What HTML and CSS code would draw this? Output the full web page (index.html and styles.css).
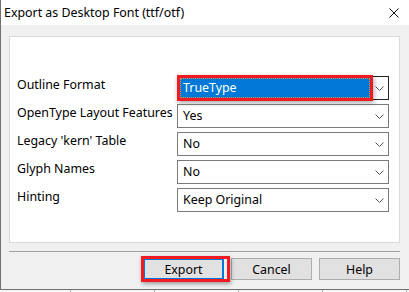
FILE: index.html
```html
<!DOCTYPE html>
<html lang="en">
<head>
    <meta charset="UTF-8">
    <title>Export as Desktop Font</title>
    <link rel="stylesheet" href="styles.css">
</head>
<body>
    <div class="window">
        <div class="titlebar">
            <span class="title">Export as Desktop Font (ttf/otf)</span>
            <span class="close">
                <svg width="10" height="10" viewBox="0 0 10 10"><path d="M0.5 0.5 L9.5 9.5 M9.5 0.5 L0.5 9.5" stroke="#111" stroke-width="1"/></svg>
            </span>
        </div>
        <div class="client">
            <div class="panel">
                <div class="form-grid">
                    <label>Outline Format</label>
                    <div class="select focused">
                        <span class="value selected">TrueType</span>
                        <svg class="chev" width="9" height="5" viewBox="0 0 9 5"><path d="M0.5 0.5 L4.5 4.5 L8.5 0.5" fill="none" stroke="#555"/></svg>
                    </div>

                    <label>OpenType Layout Features</label>
                    <div class="select">
                        <span class="value">Yes</span>
                        <svg class="chev" width="9" height="5" viewBox="0 0 9 5"><path d="M0.5 0.5 L4.5 4.5 L8.5 0.5" fill="none" stroke="#555"/></svg>
                    </div>

                    <label>Legacy 'kern' Table</label>
                    <div class="select">
                        <span class="value">No</span>
                        <svg class="chev" width="9" height="5" viewBox="0 0 9 5"><path d="M0.5 0.5 L4.5 4.5 L8.5 0.5" fill="none" stroke="#555"/></svg>
                    </div>

                    <label>Glyph Names</label>
                    <div class="select">
                        <span class="value">No</span>
                        <svg class="chev" width="9" height="5" viewBox="0 0 9 5"><path d="M0.5 0.5 L4.5 4.5 L8.5 0.5" fill="none" stroke="#555"/></svg>
                    </div>

                    <label>Hinting</label>
                    <div class="select">
                        <span class="value">Keep Original</span>
                        <svg class="chev" width="9" height="5" viewBox="0 0 9 5"><path d="M0.5 0.5 L4.5 4.5 L8.5 0.5" fill="none" stroke="#555"/></svg>
                    </div>
                </div>
            </div>
            <div class="separator"></div>
            <div class="buttons">
                <button class="btn default marked">Export</button>
                <button class="btn">Cancel</button>
                <button class="btn">Help</button>
            </div>
        </div>
    </div>
    <div class="backdrop">
        <span></span><span></span><span></span><span></span><span></span>
    </div>
</body>
</html>
```

FILE: styles.css
```css
body { margin: 0; font-family: "Noto Sans", "Open Sans", sans-serif; font-size: 12.4px; color: #000; background: #f7f7f7; overflow: hidden; }
.window { width: 408px; height: 289px; border-left: 1px solid #707070; border-bottom: 1px solid #707070; display: flex; flex-direction: column; background: #f0f0f0; }
.titlebar { height: 25px; background: #fff; display: flex; align-items: center; justify-content: space-between; padding: 0 10px 0 3px; }
.close { display: flex; align-items: center; }
.client { padding: 11px 9px 0 8px; display: flex; flex-direction: column; }
.panel { background: #fff; border: 1px solid #dadada; padding: 39px 9px 0 7px; box-sizing: border-box; height: 207px; }
.form-grid { display: grid; grid-template-columns: 160px 212px; grid-auto-rows: 24px; row-gap: 4px; }
.form-grid label { line-height: 18px; align-self: start; white-space: nowrap; }
.select { border: 1px solid #7a7a7a; display: flex; align-items: center; justify-content: space-between; padding: 0 3px 0 5px; box-sizing: border-box; }
.select.focused { border-color: #222; padding-left: 2px; }
.value { line-height: 18px; }
.value.selected { background: #0078d7; color: #fff; width: 190px; height: 20px; box-sizing: border-box; border: 1px dotted #d7913a; padding-left: 2px; line-height: 17px; box-shadow: 0 0 0 3px #f01a22, 1px 2px 5px 3px rgba(0,0,0,0.35); }
.chev { margin-right: 1px; }
.separator { height: 1px; background: #a0a0a0; margin-top: 8px; }
.buttons { display: flex; justify-content: flex-end; gap: 7px; margin-top: 6px; }
.btn { width: 81px; height: 22px; font-family: inherit; font-size: 12.4px; background: #e1e1e1; border: 1px solid #adadad; padding: 0; color: #000; }
.btn.default { border: 2px solid #0078d7; }
.marked { position: relative; }
.marked::after { content: ''; position: absolute; left: -4px; right: -8px; top: -4px; bottom: -4px; border: 3px solid #f01a22; box-shadow: 1px 2px 4px rgba(0,0,0,0.35); }
.backdrop { display: flex; height: 2px; }
.backdrop span { width: 83px; border-right: 1px solid #a8a8a8; }
.backdrop span:first-child { width: 70px; }
```
